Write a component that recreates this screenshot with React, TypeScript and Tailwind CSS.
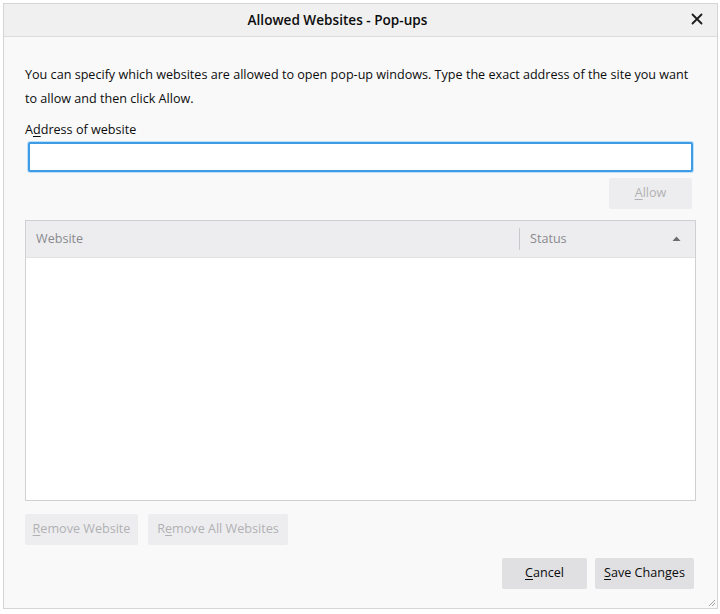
import React from "react";

const font = { fontFamily: '"Open Sans", "Noto Sans", sans-serif' };

function U({ children }: { children: React.ReactNode }) {
  return <span className="underline underline-offset-2">{children}</span>;
}

export default function App() {
  return (
    <div
      className="w-[720px] h-[614px] bg-white pt-[3px] pl-[3px] pr-[2px] pb-[5px] flex"
      style={font}
    >
      <div className="flex-1 flex flex-col border border-[#d4d4d4] bg-[#f9f9fa] relative">
        <div className="h-[33px] bg-[#f0f0f0] border-b border-[#dcdcdc] flex items-center justify-center pr-[46px] relative shrink-0">
          <span className="text-[13.6px] font-semibold text-[#0c0c0d]">Allowed Websites - Pop-ups</span>
          <span className="absolute right-[14px] top-[9px] text-[#0c0c0d]">
            <svg width="12" height="12" viewBox="0 0 12 12">
              <path d="M1.5 1.5 L10.5 10.5 M10.5 1.5 L1.5 10.5" stroke="#1a1a1a" strokeWidth="1.8" strokeLinecap="round" />
            </svg>
          </span>
        </div>
        <div className="flex-1 flex flex-col pl-[21px] pr-[21px] pt-[26px]">
          <p className="text-[12.6px] leading-[24px] text-[#0c0c0d] whitespace-nowrap">
            You can specify which websites are allowed to open pop-up windows. Type the exact address of the site you want
            <br />
            to allow and then click Allow.
          </p>
          <label className="mt-[10px] text-[12.6px] leading-[18px] text-[#0c0c0d]">
            A<U>d</U>dress of website
          </label>
          <div className="mt-[3px] mx-[3px] h-[30px] bg-white border-2 border-[#3f9be4] rounded-[2px] shadow-[0_0_0_1px_#bfe0fa]" />
          <div className="flex justify-end mt-[6px] pr-[4px]">
            <div className="w-[83px] h-[31px] bg-[#ededf0] text-[#b1b1b3] text-[12.6px] flex items-center justify-center rounded-[2px]">
              <span><U>A</U>llow</span>
            </div>
          </div>
          <div className="mt-[11px] h-[281px] border border-[#d0d0d3] bg-white flex flex-col">
            <div className="h-[37px] bg-[#ededf0] border-b border-[#e2e2e5] flex items-center text-[12.6px] text-[#8a8a8d]">
              <div className="flex-1 pl-[10px]">Website</div>
              <div className="w-px h-[22px] bg-[#c8c8cc]" />
              <div className="w-[175px] pl-[10px] flex items-center justify-between pr-[14px]">
                <span>Status</span>
                <svg width="9" height="5" viewBox="0 0 9 5">
                  <path d="M0.5 5 L4.5 0.5 L8.5 5 Z" fill="#6d6d70" />
                </svg>
              </div>
            </div>
            <div className="flex-1" />
          </div>
          <div className="flex gap-[10px] mt-[13px]">
            <div className="w-[113px] h-[31px] bg-[#ededf0] text-[#b1b1b3] text-[12.6px] flex items-center justify-center rounded-[2px]">
              <span><U>R</U>emove Website</span>
            </div>
            <div className="w-[140px] h-[31px] bg-[#ededf0] text-[#b1b1b3] text-[12.6px] flex items-center justify-center rounded-[2px]">
              <span>R<U>e</U>move All Websites</span>
            </div>
          </div>
          <div className="flex justify-end gap-[8px] mt-[13px] pr-[2px]">
            <div className="w-[85px] h-[31px] bg-[#e0e0e2] text-[#0c0c0d] text-[12.6px] flex items-center justify-center rounded-[2px]">
              <span><U>C</U>ancel</span>
            </div>
            <div className="w-[99px] h-[31px] bg-[#e0e0e2] text-[#0c0c0d] text-[12.6px] flex items-center justify-center rounded-[2px]">
              <span><U>S</U>ave Changes</span>
            </div>
          </div>
        </div>
        <svg className="absolute right-[1px] bottom-[1px]" width="8" height="8" viewBox="0 0 8 8">
          <path d="M7 1 L1 7 M7 4 L4 7" stroke="#a0a0a0" strokeWidth="1" />
        </svg>
      </div>
    </div>
  );
}
